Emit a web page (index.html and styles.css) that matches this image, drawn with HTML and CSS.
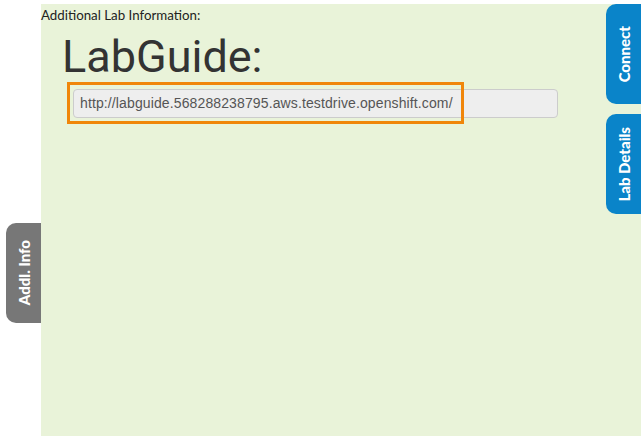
FILE: index.html
```html
<!DOCTYPE html>
<html>
<head>
<meta charset="utf-8">
<link rel="stylesheet" href="styles.css">
</head>
<body>
<div class="page">
  <div class="rail">
    <div class="tab tab-grey"><span>Addl. Info</span></div>
  </div>
  <main class="panel">
    <div class="caption">Additional Lab Information:</div>
    <h1 class="title">LabGuide:</h1>
    <div class="field-row">
      <div class="field">http://labguide.568288238795.aws.testdrive.openshift.com/</div>
      <div class="highlight"></div>
    </div>
    <div class="side-tabs">
      <div class="tab tab-blue"><span>Connect</span></div>
      <div class="tab tab-blue"><span>Lab Details</span></div>
    </div>
  </main>
</div>
</body>
</html>
```

FILE: styles.css
```css
html, body {
  margin: 0;
  padding: 0;
  background: #fff;
}
.page {
  display: flex;
  align-items: flex-start;
  padding-top: 4px;
  height: 436px;
  box-sizing: border-box;
}
.rail {
  width: 41px;
  flex: none;
  display: flex;
  justify-content: flex-end;
  padding-top: 219px;
}
.panel {
  position: relative;
  flex: 1;
  height: 432px;
  background: #e9f3d9;
}
.caption {
  font-family: "Lato", "Open Sans", sans-serif;
  font-size: 13.3px;
  color: #222;
  line-height: 14px;
  padding-top: 4px;
}
.title {
  margin: 12px 0 0 21px;
  font-family: "Roboto", sans-serif;
  font-weight: 400;
  font-size: 45px;
  line-height: 46px;
  color: #333;
}
.field-row {
  position: relative;
  margin: 9px 0 0 32px;
  width: 485px;
}
.field {
  height: 29px;
  box-sizing: border-box;
  border: 1px solid #ccc;
  border-radius: 4px;
  background: #eee;
  padding: 0 6px;
  font-family: "Liberation Sans", Arial, sans-serif;
  font-size: 14px;
  letter-spacing: 0.12px;
  line-height: 27px;
  color: #555;
  white-space: nowrap;
  overflow: hidden;
}
.highlight {
  position: absolute;
  left: -6px;
  top: -7px;
  width: 397px;
  height: 42px;
  box-sizing: border-box;
  border: 3px solid #f0860a;
}
.side-tabs {
  position: absolute;
  right: 0;
  top: 0;
  display: flex;
  flex-direction: column;
  gap: 10px;
}
.tab {
  width: 35px;
  height: 100px;
  border-radius: 10px 0 0 10px;
  display: flex;
  align-items: center;
  justify-content: center;
  color: #fff;
  font-family: "Lato", "Open Sans", sans-serif;
  font-weight: 900;
  font-size: 15px;
}
.tab span {
  writing-mode: vertical-rl;
  transform: rotate(180deg);
  white-space: nowrap;
}
.tab-blue {
  background: #0a84c9;
}
.tab-grey {
  background: #777;
}
```
